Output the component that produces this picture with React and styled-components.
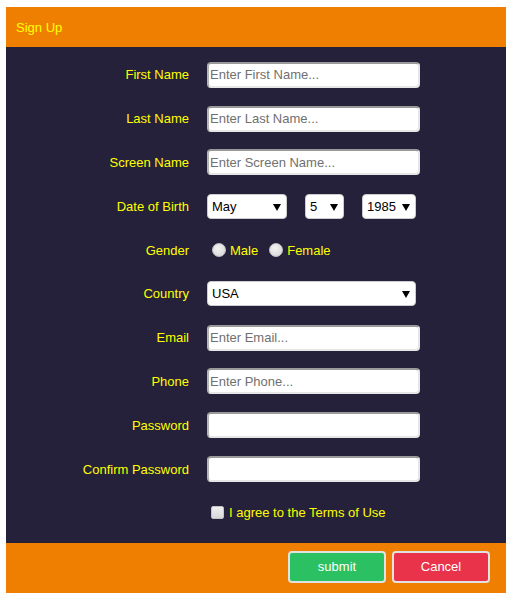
import styled, { createGlobalStyle } from "styled-components";

const GlobalStyle = createGlobalStyle`
  body {
    margin: 0;
    background: #fff;
    font-family: "Liberation Sans", Arial, sans-serif;
  }
`;

const Panel = styled.div`
  width: 500px;
  margin: 7px 0 0 6px;
  font-size: 13px;
`;

const Header = styled.div`
  height: 40px;
  background: #ee7f00;
  color: #ffff00;
  display: flex;
  align-items: center;
  padding-left: 10px;
`;

const Body = styled.div`
  background: #25213a;
  padding: 6px 0 8px;
  display: grid;
  grid-template-columns: 183px 1fr;
  column-gap: 18px;
  grid-auto-rows: 43.8px;
  align-items: center;
`;

const Label = styled.label`
  color: #ffff00;
  text-align: right;
`;

const Field = styled.div`
  display: flex;
  align-items: center;
  gap: ${(p) => p.gap || 0}px;
`;

const TextInput = styled.input`
  box-sizing: border-box;
  width: 213px;
  height: 26px;
  padding: 0 1px;
  border: 2px solid #e6e6e6;
  border-top-color: #9a9a9a;
  border-left-color: #b5b5b5;
  border-radius: 4px;
  background: #fff;
  font: 13px "Liberation Sans", Arial, sans-serif;
  color: #222;
  outline: none;
  &::placeholder {
    color: #707070;
  }
`;

const SelectWrap = styled.div`
  position: relative;
  width: ${(p) => p.w}px;
  &::after {
    content: "";
    position: absolute;
    right: 6px;
    top: 10px;
    border-left: 4px solid transparent;
    border-right: 4px solid transparent;
    border-top: 7px solid #000;
    pointer-events: none;
  }
`;

const Select = styled.select`
  appearance: none;
  box-sizing: border-box;
  width: 100%;
  height: 25px;
  padding: 0 16px 0 4px;
  border: 1px solid #ccc;
  border-radius: 4px;
  background: #fff;
  font: 13px "Liberation Sans", Arial, sans-serif;
  color: #000;
  outline: none;
`;

const Radio = styled.input.attrs({ type: "radio" })`
  appearance: none;
  box-sizing: border-box;
  width: 14px;
  height: 14px;
  margin: 0 4px 0 ${(p) => p.ml || 0}px;
  border-radius: 50%;
  border: 1px solid #c4c4c4;
  background: radial-gradient(circle at 40% 35%, #f2f2f2, #d4d4d4);
`;

const Check = styled.input.attrs({ type: "checkbox" })`
  appearance: none;
  box-sizing: border-box;
  width: 13px;
  height: 13px;
  margin: 0 5px 0 4px;
  border-radius: 2px;
  border: 1px solid #c4c4c4;
  background: linear-gradient(#f0f0f0, #d8d8d8);
`;

const OptionText = styled.span`
  color: #ffff00;
  margin-right: ${(p) => p.mr || 0}px;
`;

const Footer = styled.div`
  height: 50px;
  background: #ee7f00;
  display: flex;
  justify-content: flex-end;
  align-items: center;
  gap: 6px;
  padding-right: 16px;
  padding-bottom: 2px;
  box-sizing: border-box;
`;

const Button = styled.button`
  width: 98px;
  height: 32px;
  border: 2px solid #e2e2e2;
  border-radius: 4px;
  background: ${(p) => p.bg};
  color: #fff;
  font: 13px "Liberation Sans", Arial, sans-serif;
`;

const months = ["January", "February", "March", "April", "May", "June", "July", "August", "September", "October", "November", "December"];

export default function App() {
  return (
    <>
      <GlobalStyle />
      <Panel>
        <Header>Sign Up</Header>
        <Body>
          <Label>First Name</Label>
          <Field><TextInput placeholder="Enter First Name..." /></Field>

          <Label>Last Name</Label>
          <Field><TextInput placeholder="Enter Last Name..." /></Field>

          <Label>Screen Name</Label>
          <Field><TextInput placeholder="Enter Screen Name..." /></Field>

          <Label>Date of Birth</Label>
          <Field gap={18}>
            <SelectWrap w={80}>
              <Select defaultValue="May">
                {months.map((m) => <option key={m}>{m}</option>)}
              </Select>
            </SelectWrap>
            <SelectWrap w={39}>
              <Select defaultValue="5">
                {Array.from({ length: 31 }, (_, i) => <option key={i}>{i + 1}</option>)}
              </Select>
            </SelectWrap>
            <SelectWrap w={54}>
              <Select defaultValue="1985">
                {Array.from({ length: 60 }, (_, i) => <option key={i}>{1960 + i}</option>)}
              </Select>
            </SelectWrap>
          </Field>

          <Label>Gender</Label>
          <Field>
            <Radio name="gender" ml={5} />
            <OptionText mr={11}>Male</OptionText>
            <Radio name="gender" />
            <OptionText>Female</OptionText>
          </Field>

          <Label>Country</Label>
          <Field>
            <SelectWrap w={209}>
              <Select defaultValue="USA">
                <option>USA</option>
                <option>Canada</option>
                <option>UK</option>
              </Select>
            </SelectWrap>
          </Field>

          <Label>Email</Label>
          <Field><TextInput placeholder="Enter Email..." /></Field>

          <Label>Phone</Label>
          <Field><TextInput placeholder="Enter Phone..." /></Field>

          <Label>Password</Label>
          <Field><TextInput type="password" /></Field>

          <Label>Confirm Password</Label>
          <Field><TextInput type="password" /></Field>

          <span />
          <Field>
            <Check />
            <OptionText>I agree to the Terms of Use</OptionText>
          </Field>
        </Body>
        <Footer>
          <Button bg="#2bc062">submit</Button>
          <Button bg="#e8334a">Cancel</Button>
        </Footer>
      </Panel>
    </>
  );
}
